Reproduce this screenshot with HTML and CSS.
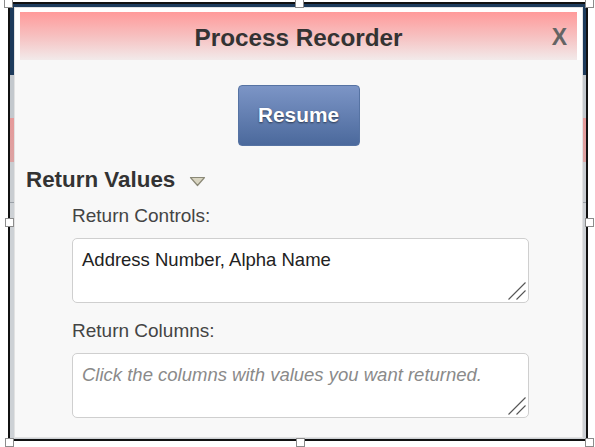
FILE: index.html
```html
<!DOCTYPE html>
<html lang="en">
<head>
<meta charset="utf-8">
<title>Process Recorder</title>
<link rel="stylesheet" href="styles.css">
</head>
<body>
<div class="frame">
  <div class="dialog">
    <div class="titlebar">
      <div class="header">
        <span class="title">Process Recorder</span>
        <span class="close">X</span>
      </div>
    </div>
    <div class="body">
      <div class="actions">
        <button class="resume" type="button">Resume</button>
      </div>
      <div class="section-head">
        <span class="section-title">Return Values</span>
        <svg class="toggle" width="17" height="11" viewBox="0 0 17 11"><polygon points="1.5,1.5 15.5,1.5 8.5,9.5" fill="#d9d5c1" stroke="#8b8977" stroke-width="1.2" stroke-linejoin="round"/></svg>
      </div>
      <div class="fields">
        <label class="field-label">Return Controls:</label>
        <div class="field-wrap">
          <textarea class="field-input" readonly>Address Number, Alpha Name</textarea>
          <svg class="grip" width="18" height="18" viewBox="0 0 18 18"><line x1="0.5" y1="17.5" x2="17.5" y2="0.5"/><line x1="8.5" y1="17.5" x2="17.5" y2="8.5"/></svg>
        </div>
        <label class="field-label second">Return Columns:</label>
        <div class="field-wrap">
          <textarea class="field-input" readonly placeholder="Click the columns with values you want returned."></textarea>
          <svg class="grip" width="18" height="18" viewBox="0 0 18 18"><line x1="0.5" y1="17.5" x2="17.5" y2="0.5"/><line x1="8.5" y1="17.5" x2="17.5" y2="8.5"/></svg>
        </div>
      </div>
    </div>
  </div>
</div>
<div class="handles">
  <span class="handle h-tl"></span>
  <span class="handle h-tm"></span>
  <span class="handle h-tr"></span>
  <span class="handle h-ml"></span>
  <span class="handle h-mr"></span>
  <span class="handle h-bl"></span>
  <span class="handle h-bm"></span>
  <span class="handle h-br"></span>
</div>
</body>
</html>
```

FILE: styles.css
```css
html, body {
  margin: 0;
  padding: 0;
  background: #ffffff;
}
body {
  width: 595px;
  height: 447px;
  overflow: hidden;
  position: relative;
  font-family: "Liberation Sans", Arial, sans-serif;
}
.frame {
  box-sizing: border-box;
  margin: 2px 0 0 8px;
  width: 580px;
  height: 439px;
  border: 2px solid #111;
  padding: 3px 3px 1px 4px;
  background: linear-gradient(to bottom,
    #1d3b5c 0, #1d3b5c 71px,
    #c3c8cd 71px, #c3c8cd 114px,
    #e69a9a 114px, #dca3a3 158px,
    #c9cdd1 158px, #c9cdd1 198px,
    #9aa0a6 198px, #9aa0a6 199px,
    #cdd1d5 199px, #cdd1d5 100%);
}
.dialog {
  box-sizing: border-box;
  height: 100%;
  border: 1px solid #e2e2e2;
  background: #f8f8f8;
  display: flex;
  flex-direction: column;
}
.titlebar {
  background: #ffffff;
  padding: 4px 5px 0 5px;
}
.header {
  position: relative;
  height: 48px;
  box-sizing: border-box;
  padding-top: 3px;
  line-height: 45px;
  text-align: center;
  background: linear-gradient(to bottom, #ff9a9a 0%, #f6c4c4 55%, #f2eaea 100%);
}
.title {
  font-size: 24.3px;
  font-weight: bold;
  color: #333333;
}
.close {
  position: absolute;
  right: 10px;
  top: 3px;
  font-size: 23px;
  font-weight: bold;
  color: #646464;
}
.body {
  flex: 1;
  padding: 0 0 0 11px;
}
.actions {
  display: flex;
  justify-content: center;
  margin-top: 25px;
  padding-right: 11px;
}
.resume {
  box-sizing: border-box;
  width: 122px;
  height: 61px;
  border: 1px solid #5673a3;
  border-radius: 4px;
  background: linear-gradient(to bottom, #7c95c6 0%, #4b699c 100%);
  color: #ffffff;
  font-family: "Liberation Sans", Arial, sans-serif;
  font-size: 20.8px;
  font-weight: bold;
  text-shadow: 0 1px 2px rgba(0, 0, 0, 0.55);
  padding: 0 0 2px 0;
}
.section-head {
  display: flex;
  align-items: center;
  margin-top: 21px;
  gap: 14px;
}
.section-title {
  font-size: 22.4px;
  font-weight: bold;
  color: #333333;
}
.toggle {
  display: block;
  margin-top: 3px;
}
.fields {
  display: flex;
  flex-direction: column;
  align-items: flex-start;
  margin-left: 46px;
  margin-top: 12px;
}
.field-label {
  font-size: 19px;
  color: #444444;
  margin-bottom: 11px;
}
.field-label.second {
  margin-top: 17px;
}
.field-wrap {
  position: relative;
  width: 457px;
  height: 65px;
}
.field-input {
  display: block;
  box-sizing: border-box;
  width: 457px;
  height: 65px;
  margin: 0;
  border: 1px solid #cfcfcf;
  border-radius: 5px;
  background: #ffffff;
  padding: 10px 9px;
  font-family: "Liberation Sans", Arial, sans-serif;
  font-size: 18.5px;
  line-height: 1.15;
  color: #222222;
  resize: none;
  outline: none;
}
.field-input::placeholder {
  font-style: italic;
  color: #8a8a8a;
}
.grip {
  position: absolute;
  right: 3px;
  bottom: 3px;
  stroke: #555555;
  stroke-width: 1.1;
}
.handles {
  position: absolute;
  left: 0;
  top: 0;
  width: 0;
  height: 0;
}
.handle {
  position: absolute;
  box-sizing: border-box;
  width: 9px;
  height: 9px;
  background: #ffffff;
  border: 1px solid #8c8c8c;
}
.h-tl { left: 4px; top: -1px; }
.h-tm { left: 295px; top: -1px; }
.h-tr { left: 585px; top: -1px; }
.h-ml { left: 5px; top: 218px; }
.h-mr { left: 585px; top: 218px; }
.h-bl { left: 5px; top: 438px; }
.h-bm { left: 296px; top: 438px; }
.h-br { left: 585px; top: 438px; }
```
